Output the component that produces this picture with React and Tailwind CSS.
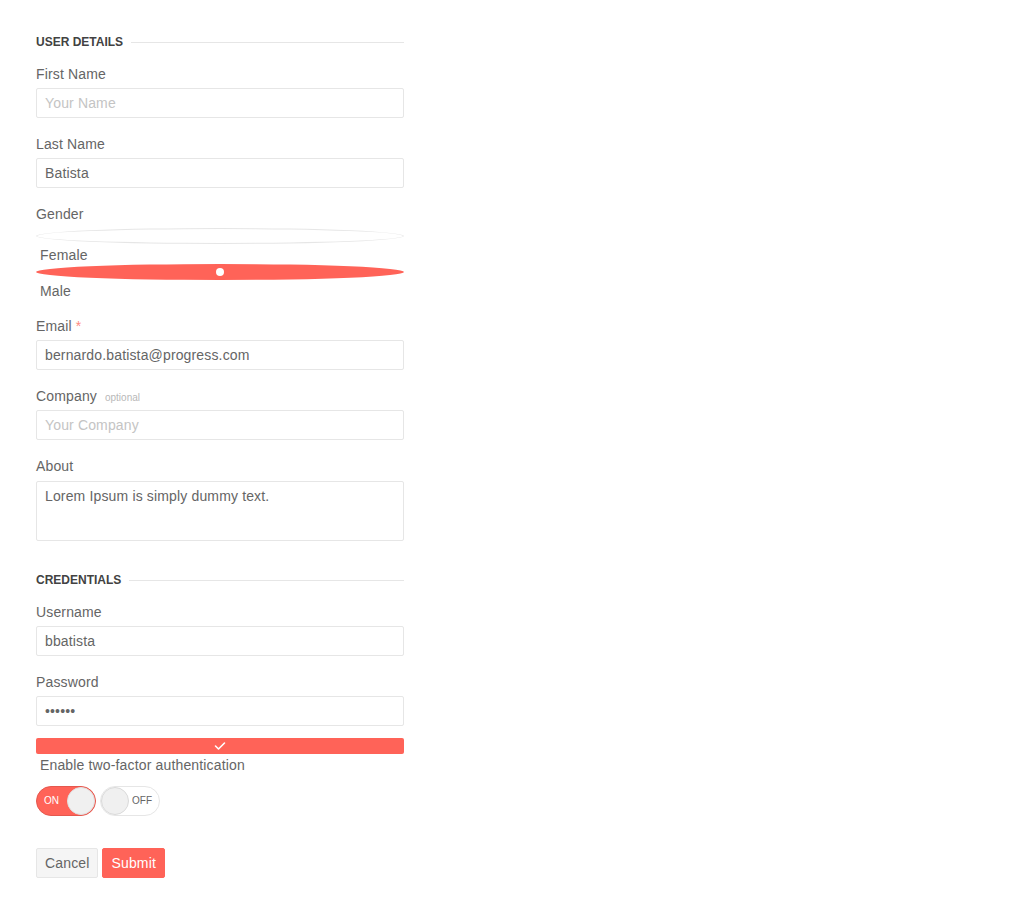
import React from "react";

const font = { fontFamily: "'Liberation Sans', Arial, sans-serif" };

function Legend({ children }) {
  return (
    <div className="flex items-center h-[20px]">
      <span className="text-[12px] font-bold uppercase text-[#424242] leading-[20px]">{children}</span>
      <div className="flex-1 h-px bg-[#e6e6e6] ml-2" />
    </div>
  );
}

function Label({ children }) {
  return <div className="text-[14px] leading-[20px] tracking-[0.15px] text-[#656565]">{children}</div>;
}

function Input({ value, placeholder, className = "" }) {
  return (
    <div className={"h-[30px] border border-[#e6e6e6] rounded-[2px] bg-white px-2 flex items-center text-[14px] tracking-[0.15px] " + className}>
      {value ? <span className="text-[#656565]">{value}</span> : <span className="text-[#c4c4c4]">{placeholder}</span>}
    </div>
  );
}

export default function App() {
  return (
    <div className="min-h-[914px] bg-white" style={font}>
      <div className="w-[368px] ml-[36px] pt-[32px]">
        <Legend>User Details</Legend>

        <div className="mt-[12px]"><Label>First Name</Label></div>
        <Input className="mt-[4px]" placeholder="Your Name" />

        <div className="mt-[16px]"><Label>Last Name</Label></div>
        <Input className="mt-[4px]" value="Batista" />

        <div className="mt-[16px]"><Label>Gender</Label></div>
        <div className="mt-[4px] h-[16px] rounded-[50%] border border-[#e6e6e6] bg-white" />
        <div className="pl-[4px] mt-px"><Label>Female</Label></div>
        <div className="mt-[-1px] h-[16px] rounded-[50%] bg-[#ff6358] flex items-center justify-center">
          <div className="w-[8px] h-[8px] rounded-full bg-white" />
        </div>
        <div className="pl-[4px] mt-px"><Label>Male</Label></div>

        <div className="mt-[15px]">
          <Label>
            Email <span className="text-[#ff8a80]">*</span>
          </Label>
        </div>
        <Input className="mt-[4px]" value="bernardo.batista@progress.com" />

        <div className="mt-[16px] flex items-baseline">
          <Label>Company</Label>
          <span className="ml-[8px] text-[10px] text-[#b8b8b8]">optional</span>
        </div>
        <Input className="mt-[4px]" placeholder="Your Company" />

        <div className="mt-[16px]"><Label>About</Label></div>
        <div className="mt-[5px] h-[60px] border border-[#e6e6e6] rounded-[2px] px-2 pt-[4px] text-[14px] leading-[20px] tracking-[0.15px] text-[#656565]">
          Lorem Ipsum is simply dummy text.
        </div>

        <div className="mt-[29px]"><Legend>Credentials</Legend></div>

        <div className="mt-[12px]"><Label>Username</Label></div>
        <Input className="mt-[4px]" value="bbatista" />

        <div className="mt-[16px]"><Label>Password</Label></div>
        <Input className="mt-[4px]" value="••••••" />

        <div className="mt-[12px] h-[16px] rounded-[2px] bg-[#ff6358] flex items-center justify-center">
          <svg width="12" height="10" viewBox="0 0 12 10" fill="none">
            <path d="M1.5 5 L4.5 8 L10.5 2" stroke="white" strokeWidth="1.6" strokeLinecap="round" strokeLinejoin="round" />
          </svg>
        </div>
        <div className="pl-[4px] mt-px"><Label>Enable two-factor authentication</Label></div>

        <div className="mt-[11px] flex gap-[4px]">
          <div className="relative w-[60px] h-[30px] rounded-full bg-[#ff6358] border border-[#e5584e]">
            <span className="absolute left-[7px] top-[7px] text-[10px] leading-[14px] text-white">ON</span>
            <div className="absolute right-0 top-0 w-[28px] h-[28px] rounded-full bg-[#f0f0f0] border border-[#e0e0e0]" />
          </div>
          <div className="relative w-[60px] h-[30px] rounded-full bg-white border border-[#e6e6e6]">
            <div className="absolute left-0 top-0 w-[28px] h-[28px] rounded-full bg-[#f0f0f0] border border-[#dadada]" />
            <span className="absolute right-[7px] top-[7px] text-[10px] leading-[14px] text-[#656565]">OFF</span>
          </div>
        </div>

        <div className="mt-[32px] flex gap-[4px]">
          <div className="h-[30px] px-[8px] flex items-center rounded-[2px] bg-[#f5f5f5] border border-[#e6e6e6] text-[14px] tracking-[0.15px] text-[#656565]">Cancel</div>
          <div className="h-[30px] px-[8px] flex items-center rounded-[2px] bg-[#ff6358] border border-[#ff6358] text-[14px] tracking-[0.15px] text-white">Submit</div>
        </div>
      </div>
    </div>
  );
}
